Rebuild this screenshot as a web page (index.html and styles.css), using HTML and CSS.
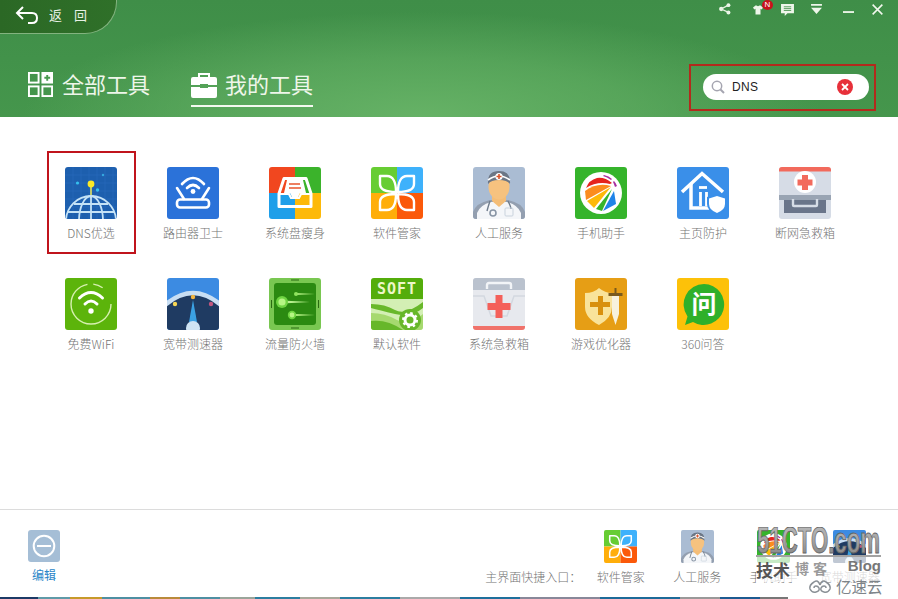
FILE: index.html
```html
<!DOCTYPE html>
<html lang="zh-CN">
<head>
<meta charset="utf-8">
<title>我的工具</title>
<link rel="stylesheet" href="styles.css">
</head>
<body>
<svg class="defs" aria-hidden="true">
  <defs>
    <linearGradient id="wm-grad" x1="0" y1="0" x2="0" y2="1"><stop offset="0" stop-color="#c2c2c2"/><stop offset=".55" stop-color="#a0a0a0"/><stop offset="1" stop-color="#7d7d7d"/></linearGradient>
    <clipPath id="rc"><rect width="52" height="52" rx="3"/></clipPath>
    <symbol id="i-dns" viewBox="0 0 52 52"><g clip-path="url(#rc)">
      <rect width="52" height="52" fill="#1d5fae"/>
      <path d="M0 8h52M0 16h52M0 24h52M0 32h52M0 40h52M8 0v52M16 0v52M24 0v52M32 0v52M40 0v52M48 0v52" stroke="#2a6cba" stroke-width=".7"/>
      <circle cx="12.5" cy="16" r="1.6" fill="#35c0ee"/><circle cx="38" cy="8" r="1.2" fill="#35a8e0"/><circle cx="32.5" cy="23" r="1.7" fill="#35c0ee"/>
      <path d="M26 18v13" stroke="#f2ee5a" stroke-width="1.5"/><circle cx="26" cy="17" r="3.4" fill="#fbe926"/>
      <g fill="none" stroke="#c4e2f6" stroke-width="1.8"><circle cx="26" cy="54" r="25"/><ellipse cx="26" cy="54" rx="12" ry="25"/><path d="M26 29v23M3 45h46M9 37h34"/></g>
    </g></symbol>
    <symbol id="i-router" viewBox="0 0 52 52"><rect width="52" height="52" rx="3" fill="#2b72d9"/>
      <g fill="none" stroke="#fff" stroke-width="2.6" stroke-linecap="round"><path d="M15 17q11-12 22 0"/><path d="M20 21q6-6 12 0"/><rect x="10" y="32.5" width="32" height="8" rx="3"/><path d="M10 21l7 11M42 21l-7 11"/></g>
      <circle cx="26" cy="24.5" r="2.4" fill="#fff"/></symbol>
    <symbol id="i-disk" viewBox="0 0 52 52"><g clip-path="url(#rc)">
      <rect width="26" height="26" fill="#f1471f"/><rect x="26" width="26" height="26" fill="#3bb32b"/><rect y="26" width="26" height="26" fill="#1f9fe9"/><rect x="26" y="26" width="26" height="26" fill="#fdb909"/>
      <path d="M15 11.500h22l5 15v13H10v-13z" fill="none" stroke="#fff" stroke-width="3" stroke-linejoin="round"/>
      <path d="M18 13h16l3 13h-6l-2 4h-6l-2-4h-6z" fill="#fff"/>
      <path d="M20 17h11M20 21h12" stroke="#e8562e" stroke-width="1.600"/><path d="M11 27h9l2 4h8l2-4h9" fill="none" stroke="#fff" stroke-width="2.200"/></g></symbol>
    <symbol id="i-soft" viewBox="0 0 52 52"><g clip-path="url(#rc)">
      <rect width="26" height="26" fill="#67cd33"/><rect x="26" width="26" height="26" fill="#3eb1fb"/><rect y="26" width="26" height="26" fill="#ffae0a"/><rect x="26" y="26" width="26" height="26" fill="#fb590a"/>
      <g fill="none" stroke="#fff" stroke-width="2.400" stroke-linejoin="round"><path d="M25 25C25 15 22 9 16 9H9v8c0 5 6 8 16 8zM27 25C27 15 30 9 36 9h7v8c0 5-6 8-16 8zM25 27C25 37 22 43 16 43H9v-8c0-5 6-8 16-8zM27 27c0 10 3 16 9 16h7v-8c0-5-6-8-16-8z"/></g></g></symbol>
    <symbol id="i-doc" viewBox="0 0 52 52"><g clip-path="url(#rc)">
      <rect width="52" height="52" fill="#aabcd3"/><path d="M0 52v-7q3-9 17-12h18q14 3 17 12v7z" fill="#939fb0"/><path d="M4 52v-6q3-8 14-11h16q11 3 14 11v6z" fill="#f4f6f9"/>
      <path d="M19 28h14v6l-7 6-7-6z" fill="#f4bd77"/><ellipse cx="26" cy="20" rx="10.5" ry="12.5" fill="#f6c27f"/>
      <path d="M15 17q-1-13 11-13t11 13q-3-4-11-4t-11 4z" fill="#6c7685"/><path d="M15 13q11-8 22 0" fill="none" stroke="#fff" stroke-width="1.6"/>
      <circle cx="26" cy="9.5" r="3.6" fill="#fff"/><path d="M26 7v5M23.5 9.5h5" stroke="#d9542b" stroke-width="1.6"/>
      <path d="M17 34q-2 6-3 10M35 34q3 6 3 8" fill="none" stroke="#6f7c8c" stroke-width="1.4"/><circle cx="20" cy="46" r="3" fill="none" stroke="#8895a5" stroke-width="1.6"/><rect x="32" y="41" width="8" height="8" rx="1" fill="none" stroke="#c9d2dc" stroke-width="1"/></g></symbol>
    <symbol id="i-phone" viewBox="0 0 52 52"><rect width="52" height="52" rx="3" fill="#35b42b"/><circle cx="26" cy="26" r="21" fill="#fff"/>
      <path d="M11 21Q14 13 22 11q8-1 15 5l-2 1Q22 14 11 21z" fill="#e5231d"/><path d="M10 24l1 9 25-14Q22 15 10 24z" fill="#fb8c1e"/><path d="M12 34l7 7 17-21z" fill="#fdb909"/><path d="M21 42l6 2 10-22z" fill="#35b42b"/><path d="M28 44l13-7-2-13z" fill="#1f84e8"/>
      <path d="M29 8q5 1 8 4l-1 1q-4-3-8-4zM39 14q2 2 3 5l-2 1q-1-3-2-5z" fill="#a82fa0"/></symbol>
    <symbol id="i-home" viewBox="0 0 52 52"><rect width="52" height="52" rx="3" fill="#3a8fe9"/>
      <g fill="none" stroke="#fff"><path d="M5 25L25 6.500 46 25" stroke-width="3.500"/><path d="M14 17v24h18" stroke-width="3.500"/><path d="M22 20.500h8" stroke-width="2.800"/><path d="M23.500 25v14M29.500 25v14" stroke-width="2.800"/></g>
      <path d="M40 27l10 3v7q0 7-10 11-10-4-10-11v-7z" fill="#3a8fe9"/><path d="M40 29l8 2.500v5.500q0 6-8 9-8-3-8-9v-5.500z" fill="#fff"/></symbol>
    <symbol id="i-kit" viewBox="0 0 52 52"><g clip-path="url(#rc)">
      <rect width="52" height="52" fill="#d6dce6"/><rect width="52" height="4.500" fill="#f26a5c"/><circle cx="26" cy="15" r="11" fill="#fff"/><path d="M23 8h6v4.500h4.500v6H29V23h-6v-4.500h-4.500v-6H23z" fill="#f26a5c"/>
      <rect y="28" width="52" height="5" fill="#99a4b3"/><rect x="5" y="33" width="42" height="13" fill="#6a758a"/><path d="M14 32v6q0 1 1 1h22q1 0 1-1v-6" fill="none" stroke="#d6dce6" stroke-width="2.400"/></g></symbol>
    <symbol id="i-wifi" viewBox="0 0 52 52"><rect width="52" height="52" rx="3" fill="#5cb40b"/>
      <circle cx="26" cy="26" r="20" fill="none" stroke="#d6f0b0" stroke-width="1.400" stroke-dasharray="90 6 10 20"/><g fill="none" stroke="#fff" stroke-width="3" stroke-linecap="round"><path d="M14.500 20q11.500-11 23 0"/><path d="M20 26q6-6 12 0"/></g><circle cx="26" cy="33" r="2.700" fill="#fff"/></symbol>
    <symbol id="i-speed" viewBox="0 0 52 52"><g clip-path="url(#rc)">
      <rect width="52" height="52" fill="#3c8be2"/><path d="M-4 52V28Q26 3 56 28v24z" fill="#1f3b62"/><path d="M-2 27Q26 3 54 27" fill="none" stroke="#c8def3" stroke-width="4.500"/>
      <circle cx="8" cy="26" r="2.200" fill="#f6d655"/><circle cx="26" cy="19" r="2.200" fill="#f2b540"/><circle cx="44" cy="26" r="2.200" fill="#c2577f"/>
      <path d="M26 22l4 22h-8z" fill="#3ba1e3"/><circle cx="26" cy="50" r="7" fill="#cfe4f4"/></g></symbol>
    <symbol id="i-fw" viewBox="0 0 52 52"><rect width="52" height="52" rx="3" fill="#79c751"/><rect x="5" y="5" width="42" height="42" rx="3" fill="#2b8a11"/>
      <path d="M22 2h8M22 50h8M2.500 22v8M49.500 22v8" stroke="#2b6b12" stroke-width="1"/>
      <path d="M13 22.500l28 1.500-28 1.500z" fill="#b9f090"/><path d="M23 35.800l23 1.200-23 1.200z" fill="#a8e87a"/><path d="M27 15l19 1-19 1z" fill="#a8e87a"/>
      <circle cx="13" cy="24" r="6" fill="#6fd442"/><circle cx="13" cy="24" r="3.600" fill="#b6f684"/><circle cx="23" cy="37" r="4.200" fill="#6fd442"/><circle cx="23" cy="37" r="2.400" fill="#b6f684"/><circle cx="27" cy="16" r="2" fill="#8fe35f"/></symbol>
    <symbol id="i-def" viewBox="0 0 52 52"><g clip-path="url(#rc)">
      <rect width="52" height="52" fill="#d3efb4"/><rect width="52" height="21" fill="#54ad0b"/>
      <text x="26" y="16" class="soft-text">SOFT</text>
      <path d="M0 26q14 0 24 6t28-8v6q-12 10-28 6T0 30z" fill="#68b82a"/><path d="M0 35q14 0 26 7t26-6v16H0z" fill="#a6d96f"/><path d="M0 43q16-2 32 9H0z" fill="#67b72a"/>
      <circle cx="39" cy="42" r="11" fill="#67b72a"/><circle cx="39" cy="42" r="5" fill="none" stroke="#fff" stroke-width="3"/><circle cx="39" cy="42" r="7" fill="none" stroke="#fff" stroke-width="2" stroke-dasharray="2.600 2.900"/></g></symbol>
    <symbol id="i-aid" viewBox="0 0 52 52"><g clip-path="url(#rc)">
      <rect width="52" height="52" fill="#e7e9ee"/><rect width="52" height="12" fill="#bac2ce"/><path d="M14 11V7q0-2 2-2h20q2 0 2 2v4" fill="none" stroke="#f2f4f7" stroke-width="2.400"/>
      <path d="M0 18h11l7 20h16l7-20h11" fill="none" stroke="#d3d8e0" stroke-width="1.500"/><rect y="48" width="52" height="4" fill="#f0726a"/>
      <path d="M22.500 17h7v8h8v7h-8v8h-7v-8h-8v-7h8z" fill="#f4605a"/></g></symbol>
    <symbol id="i-game" viewBox="0 0 52 52"><rect width="52" height="52" rx="3" fill="#e69e15"/>
      <path d="M10 15q9 0 14-5 6 5 13 5v14q0 11-13 18-14-7-14-18z" fill="#f9e39a"/>
      <path d="M23 18h5v6h7v5h-7v8h-5v-8h-8v-5h8z" fill="#d8900e"/>
      <path d="M37 18h7v18l-3.500 11-3.500-11z" fill="#f7f2dd"/><path d="M39.500 10h2v5h6v3h-14v-3h6z" fill="#7a5a1c"/></symbol>
    <symbol id="i-qa" viewBox="0 0 52 52"><rect width="52" height="52" rx="3" fill="#fdc109"/>
      <path d="M27 6a20.500 20.500 0 1 1-11 38l-8 3 2.500-8.500A20.500 20.500 0 0 1 27 6z" fill="#2fb02a"/>
      <text x="27" y="35" class="qa-text">问</text></symbol>
  </defs>
</svg>

<div class="app">
  <header class="header">
    <div class="topbar">
      <a class="back">
        <svg class="back-icon" viewBox="0 0 26 20"><path d="M9 2L3 8l6 6M3 8h15q5 0 5 5t-5 5h-4" fill="none" stroke="#fff" stroke-width="2"/></svg>
        <span class="back-text">返 回</span>
      </a>
      <div class="win">
        <svg class="wi wi-share" viewBox="0 0 14 14"><circle cx="11" cy="2.500" r="2.300"/><circle cx="11" cy="11" r="2.300"/><circle cx="2.600" cy="7" r="2.500"/><path d="M11 2.500L2.600 7l8.400 4" fill="none" stroke="#e8f2e2" stroke-width="1.500"/></svg>
        <span class="skin">
          <svg class="wi wi-shirt" viewBox="0 0 12 12"><path d="M3.500 1L0 3.500l1.500 2.500 1.500-.8V12h6V5.200l1.500.8L12 3.500 8.500 1Q6 3 3.500 1z"/></svg>
          <span class="badge">N</span>
        </span>
        <svg class="wi wi-msg" viewBox="0 0 14 13"><path d="M0 0h14v10H7l-3 3v-3H0z"/><path d="M3 3h8M3 5h8M3 7h8" stroke="#3f8c46" stroke-width=".9"/></svg>
        <svg class="wi wi-menu" viewBox="0 0 14 11"><path d="M1 0h12v2H1zM1 4h12L7 11z"/></svg>
        <svg class="wi wi-min" viewBox="0 0 12 3"><path d="M0 0h12v2H0z"/></svg>
        <svg class="wi wi-close" viewBox="0 0 12 12"><path d="M.7.700l10.600 10.600M11.300.700L.7 11.300" fill="none" stroke="#f2f8ee" stroke-width="1.700"/></svg>
      </div>
    </div>
    <nav class="nav">
      <a class="tab">
        <svg class="tab-icon" viewBox="0 0 26 26"><g fill="none" stroke="#fff" stroke-width="2"><rect x="1" y="1" width="10" height="10"/><rect x="1" y="15" width="10" height="10"/><rect x="15" y="15" width="10" height="10"/></g><rect x="14" width="12" height="12" fill="#fff"/><path d="M20 3v6M17 6h6" stroke="#4a9a50" stroke-width="2"/></svg>
        <span>全部工具</span>
      </a>
      <a class="tab tab-on">
        <svg class="tab-icon" viewBox="0 0 26 26"><path d="M8 6V2h10v4" fill="none" stroke="#fff" stroke-width="2"/><path d="M2 5h22a2 2 0 0 1 2 2v6h-9v-1H9v1H0V7a2 2 0 0 1 2-2zM0 15h9v1h8v-1h9v9a2 2 0 0 1-2 2H2a2 2 0 0 1-2-2z" fill="#fff"/></svg>
        <span>我的工具</span>
      </a>
      <div class="search-mark">
        <div class="search">
          <svg class="s-ico" viewBox="0 0 14 14"><circle cx="6" cy="6" r="4.700" fill="none" stroke="#a5a5b0" stroke-width="1.500"/><path d="M9.500 9.500L13 13" stroke="#a5a5b0" stroke-width="2"/></svg>
          <span class="s-text">DNS</span>
          <svg class="s-clear" viewBox="0 0 16 16"><circle cx="8" cy="8" r="8" fill="#e7303a"/><path d="M5 5l6 6M11 5l-6 6" stroke="#fff" stroke-width="1.800"/></svg>
        </div>
      </div>
    </nav>
  </header>

  <main class="grid">
    <a class="tool tool-mark"><svg class="ic"><use href="#i-dns"/></svg><span>DNS优选</span></a>
    <a class="tool"><svg class="ic"><use href="#i-router"/></svg><span>路由器卫士</span></a>
    <a class="tool"><svg class="ic"><use href="#i-disk"/></svg><span>系统盘瘦身</span></a>
    <a class="tool"><svg class="ic"><use href="#i-soft"/></svg><span>软件管家</span></a>
    <a class="tool"><svg class="ic"><use href="#i-doc"/></svg><span>人工服务</span></a>
    <a class="tool"><svg class="ic"><use href="#i-phone"/></svg><span>手机助手</span></a>
    <a class="tool"><svg class="ic"><use href="#i-home"/></svg><span>主页防护</span></a>
    <a class="tool"><svg class="ic"><use href="#i-kit"/></svg><span>断网急救箱</span></a>
    <a class="tool"><svg class="ic"><use href="#i-wifi"/></svg><span>免费WiFi</span></a>
    <a class="tool"><svg class="ic"><use href="#i-speed"/></svg><span>宽带测速器</span></a>
    <a class="tool"><svg class="ic"><use href="#i-fw"/></svg><span>流量防火墙</span></a>
    <a class="tool"><svg class="ic"><use href="#i-def"/></svg><span>默认软件</span></a>
    <a class="tool"><svg class="ic"><use href="#i-aid"/></svg><span>系统急救箱</span></a>
    <a class="tool"><svg class="ic"><use href="#i-game"/></svg><span>游戏优化器</span></a>
    <a class="tool"><svg class="ic"><use href="#i-qa"/></svg><span>360问答</span></a>
  </main>

  <footer class="footer">
    <a class="edit">
      <svg class="edit-ic" viewBox="0 0 32 32"><rect width="32" height="32" rx="3" fill="#a5bed6"/><circle cx="16" cy="16" r="10.300" fill="none" stroke="#fff" stroke-width="2"/><path d="M9 16h14" stroke="#fff" stroke-width="2"/></svg>
      <span>编辑</span>
    </a>
    <div class="quick">
      <span class="quick-label">主界面快捷入口：</span>
      <a class="qi"><svg class="qi-ic"><use href="#i-soft"/></svg><span>软件管家</span></a>
      <a class="qi"><svg class="qi-ic"><use href="#i-doc"/></svg><span>人工服务</span></a>
      <a class="qi"><svg class="qi-ic"><use href="#i-phone"/></svg><span>手机助手</span></a>
      <a class="qi"><svg class="qi-ic"><use href="#i-speed"/></svg><span>宽带测速器</span></a>
    </div>
  </footer>
  <div class="strip"></div>

  <div class="wm">
    <div class="wm-main"><svg class="wm-logo" viewBox="0 0 125 28"><text x="1" y="26" textLength="123" lengthAdjust="spacingAndGlyphs" class="wm-text">51CTO.com</text></svg></div>
    <div class="wm-sub"><b>技术</b><i>博客</i><em>Blog</em></div>
  </div>
  <div class="yisu">
    <svg class="yisu-ic" viewBox="0 0 24 16"><g fill="none" stroke="#8a9096" stroke-width="1.500"><path d="M12 7Q10 1 6 4 1 7 2 11q2 4 6 3 4-1 3-4-1-2-3-2-2 0-2 2"/><path d="M12 7q2-6 6-3 5 3 4 7-2 4-6 3-4-1-3-4 1-2 3-2 2 0 2 2"/></g></svg>
    <span>亿速云</span>
  </div>
</div>
</body>
</html>
```

FILE: styles.css
```css
* { box-sizing: border-box; }
html, body { margin: 0; padding: 0; height: 100%; overflow: hidden; background: #fff; }
body { font-family: "Noto Sans CJK SC", "Liberation Sans", sans-serif; font-size: 12px; font-weight: 300; color: #747474; }
.defs { position: absolute; width: 0; height: 0; }
.soft-text { font: bold 15px "DejaVu Sans Mono", monospace; fill: #eef6c8; text-anchor: middle; letter-spacing: 1px; }
.qa-text { font: bold 25px "Noto Sans CJK SC", sans-serif; fill: #fff; text-anchor: middle; }

.app { position: relative; width: 898px; height: 599px; display: flex; flex-direction: column; }

/* header */
.header {
  height: 117px;
  flex: none;
  background:
    radial-gradient(ellipse 400px 105px at 47% 100%, #66b266 0%, rgba(102,178,102,.55) 55%, rgba(102,178,102,0) 100%),
    linear-gradient(#3f8e48, #45964c);
  color: #fff;
}
.topbar { height: 34px; display: flex; justify-content: space-between; }
.back {
  width: 117px; height: 34px;
  display: flex; align-items: center;
  padding: 0 0 4px 14px;
  background: linear-gradient(90deg, #2b6825, #2f7029);
  border: solid #83b37f; border-width: 0 1px 1px 0;
  border-bottom-right-radius: 32px;
}
.back-icon { width: 26px; height: 20px; }
.back-text { margin-left: 9px; font-size: 13px; font-weight: 400; color: #e8f1e6; letter-spacing: 4.500px; white-space: pre; }
.win { display: flex; align-items: flex-start; padding-right: 15px; }
.wi { fill: #eef6ea; display: block; }
.wi-share { width: 12px; height: 12px; margin-top: 3px; }
.skin { position: relative; display: block; width: 10px; margin-left: 22px; }
.wi-shirt { width: 10px; height: 11px; margin-top: 4px; }
.badge {
  position: absolute; left: 9px; top: 0;
  width: 11px; height: 10px; border-radius: 50%;
  background: #c8121c; color: #fff;
  font: 8px/10px "Liberation Sans", sans-serif; text-align: center;
}
.wi-msg { width: 13px; height: 12px; margin: 4px 0 0 18px; }
.wi-menu { width: 13px; height: 10px; margin: 4px 0 0 16px; }
.wi-min { width: 11px; height: 3px; margin: 11px 0 0 20px; }
.wi-close { width: 11px; height: 11px; margin: 4px 0 0 18px; }

.nav { display: flex; padding-left: 28px; height: 83px; align-items: flex-start; }
.tab {
  display: flex; align-items: center; height: 43px; margin-top: 30px;
  font-size: 22px; line-height: 36px; font-weight: 400; color: #eef6ea;
  border-bottom: 2px solid transparent;
}
.tab:first-child { margin-right: 41px; }
.tab span { margin: 0 0 4px 9px; }
.tab-icon { width: 25px; height: 25px; flex: none; }
.tab-on { border-bottom-color: #f4f9f0; }
.tab-on .tab-icon { width: 26px; height: 26px; }
.tab-on span { margin-left: 8px; }
.search-mark {
  margin: 30px 22px 0 auto;
  width: 187px; height: 47px;
  padding: 8px 5px 0 12px;
  border: 2px solid #b32a1c;
}
.search {
  height: 26px; border-radius: 13px; background: #fff;
  display: flex; align-items: center; padding: 0 16px 0 8px;
  color: #333;
}
.s-ico { width: 14px; height: 14px; flex: none; }
.s-text { margin-left: 7px; font: 12px "Liberation Sans", sans-serif; letter-spacing: .3px; color: #222; }
.s-clear { width: 16px; height: 16px; margin-left: auto; }

/* grid */
.grid {
  flex: 1; min-height: 0;
  padding: 50px 0 0 40px;
  display: grid;
  grid-template-columns: repeat(8, 102px);
  grid-auto-rows: 111px;
  align-content: start;
}
.tool { position: relative; display: flex; flex-direction: column; align-items: center; line-height: 16px; white-space: nowrap; }
.ic { width: 52px; height: 52px; display: block; margin-bottom: 6px; flex: none; }
.tool-mark::after {
  content: ""; position: absolute; left: 7px; top: -16px;
  box-sizing: border-box;
  width: 89px; height: 103px; border: 2px solid #c0141c;
}

/* footer */
.footer {
  flex: none; height: 88px;
  border-top: 1px solid #dcdcdc;
  display: flex; justify-content: space-between; align-items: flex-start;
  padding: 20px 10px 0 28px;
}
.edit { display: flex; flex-direction: column; align-items: center; width: 32px; color: #2a86c8; font-weight: 400; line-height: 16px; }
.edit-ic { width: 32px; height: 32px; display: block; margin-bottom: 5px; }
.quick { display: flex; align-items: flex-end; }
.quick-label { white-space: nowrap; line-height: 16px; margin-right: 1.500px; }
.qi { width: 76.330px; display: flex; flex-direction: column; align-items: center; line-height: 16px; white-space: nowrap; }
.qi-ic { width: 33px; height: 33px; display: block; margin-bottom: 6px; }
.strip {
  flex: none; height: 2px; width: 788px;
  background: linear-gradient(90deg, #1c3a66 0 38px, #5f9aa8 38px 70px, #c79a2a 70px 102px, #4e8fa2 102px 150px, #b98a3a 150px 180px, #4e8fa2 180px 220px, #9aa59a 220px 255px, #2c7ea0 255px 300px, #a8a89a 300px 340px, #2c7ea0 340px 400px, #aaa 400px 460px, #1e6f9c 460px 520px, #889 520px 600px, #1c6a98 600px 680px, #999 680px 720px, #1c5a90 720px 760px, #777 760px 788px);
}

/* watermark overlay */
.wm { position: absolute; left: 756px; top: 527px; width: 125px; }
.wm-main { height: 30px; border-bottom: 2px solid #a2a2a2; }
.wm-logo { display: block; width: 125px; height: 28px; }
.wm-text {
  font: bold 36px "Liberation Sans", sans-serif;
  fill: url(#wm-grad);
  stroke: #666;
  stroke-width: .9px;
}
.wm-sub {
  display: flex; align-items: flex-start; white-space: nowrap; height: 25px;
  background: rgba(255,255,255,.72);
}
.wm-sub b { font-size: 17px; line-height: 26px; font-weight: 700; color: #555; }
.wm-sub i { font-style: normal; font-weight: 700; font-size: 14px; line-height: 22px; color: #9a9a9a; margin-left: 5px; letter-spacing: 4px; }
.wm-sub em { font: bold 15px/18px "Liberation Sans", sans-serif; font-style: normal; color: #777; margin-left: auto; }
.yisu { position: absolute; left: 808px; top: 576px; display: flex; align-items: center; color: #7d8489; font-size: 15.500px; line-height: 20px; font-weight: 400; }
.yisu-ic { width: 24px; height: 16px; margin-right: 4px; }
```
